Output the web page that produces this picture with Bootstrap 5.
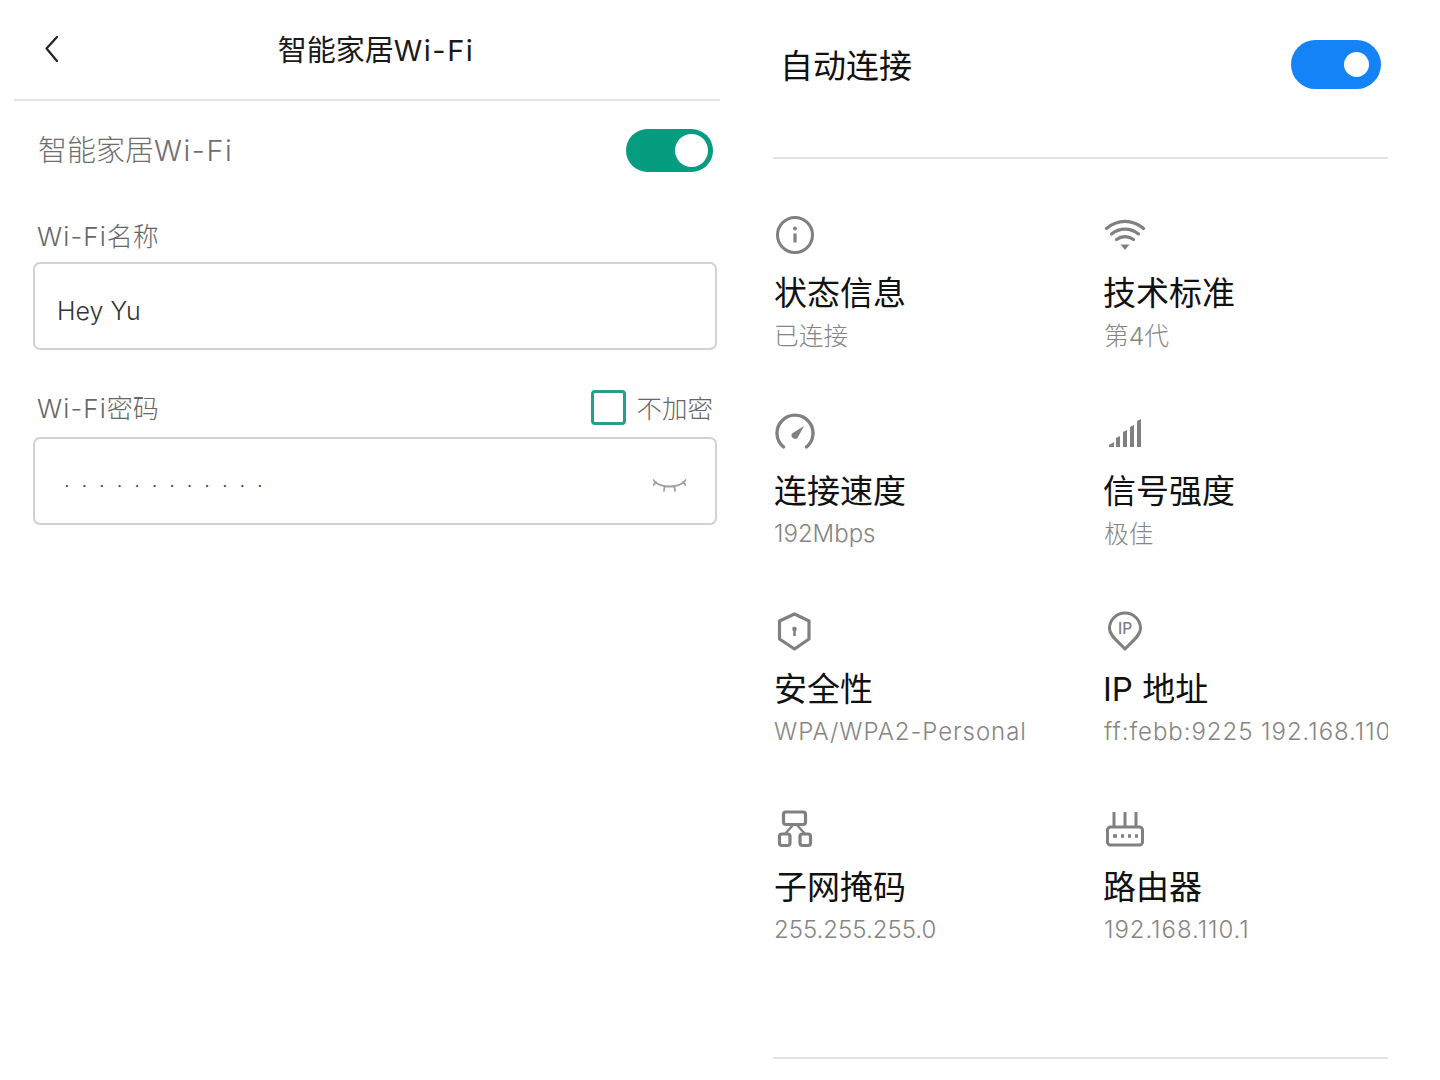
<!DOCTYPE html>
<html lang="zh">
<head>
<meta charset="utf-8">
<title>智能家居Wi-Fi</title>
<link href="https://cdn.jsdelivr.net/npm/bootstrap@5.3.0/dist/css/bootstrap.min.css" rel="stylesheet">
<style>
html,body{height:1080px;overflow:hidden;background:#fff}
body{font-family:Inter,"Noto Sans CJK SC",sans-serif;font-weight:400;color:#111}
.shell{width:1440px;height:1080px}
.pane-left{width:720px;padding-left:14px}
.pane-right{width:615px;margin-left:53px}
.top-bar{height:101px;border-bottom:2px solid #e4e4e4;padding-left:30px;padding-bottom:2px}
.top-title{font-size:29px;line-height:1;color:#1a1a1a;width:100%;text-align:center;padding-right:12px;padding-top:4px}
.back-ico{width:16px;height:30px;flex:none;margin-right:-16px}
.latin-wide{letter-spacing:1.500px}
.field-label .latin-wide{letter-spacing:1.100px}
.smart-row{height:100px;padding:0 7px 2px 24px}
.smart-label{font-size:29px;color:#6e6e6e;line-height:1;font-weight:300;margin-top:1px}
.sw-green{width:87px;height:43px;border-radius:22px;background:#069c80;padding-right:5px}
.sw-green i{display:block;width:33px;height:33px;border-radius:50%;background:#fff}
.field-label{font-size:26px;line-height:1;color:#666;font-weight:300;margin-top:2px}
.name-head{height:61px;padding:9px 0 0 23px}
.pass-head{height:87px;padding:28px 7px 0 23px}
.box-field{height:88px;margin-left:19px;width:684px;border:2px solid #d2d2d2;border-radius:7px;font-size:25px;font-weight:300;color:#333;padding:12px 29px 0 22px}
.check-box{width:35px;height:35px;border:3px solid #2a9d8a;border-radius:4px;flex:none;display:block}
.enc-wrap{gap:10px}
.no-enc{font-size:25.500px;color:#666;line-height:1;font-weight:300;margin-top:2px}
.dots-text{font-size:20px;letter-spacing:11.900px;color:#444;padding:0 0 2px 7px;line-height:1}
.eye-ico{margin-top:0}
.auto-row{height:159px;border-bottom:2px solid #e4e4e4;padding:0 7px 28px 7px}
.auto-title{font-size:33px;line-height:1;color:#111;margin-top:4px}
.sw-blue{width:90px;height:49px;border-radius:25px;background:#1583f8;padding-right:12px}
.sw-blue i{display:block;width:25px;height:25px;border-radius:50%;background:#fff}
.stat-grid{display:grid;grid-template-columns:329px 286px;grid-auto-rows:198px;padding-top:55px;height:900px;border-bottom:2px solid #e4e4e4}
.stat-cell{overflow:hidden;padding-left:1px;white-space:nowrap}
.stat-ico{display:block;width:42px;height:42px;margin:0 0 17px -1px}
.stat-cell:nth-child(even) .stat-ico{margin-left:1px}
.stat-cell:nth-child(even) .stat-val{padding-left:1px}
.stat-name{font-size:33px;line-height:40px;color:#111;margin-bottom:5px;font-weight:400}
.stat-val{font-size:24px;line-height:36px;color:#858585;font-weight:300}
.cjk-val{font-size:24.700px}
.val-wide{letter-spacing:.950px}
svg{display:block}
.ip-mark{font-family:Inter,sans-serif;font-size:15.500px;font-weight:500;fill:#808080}
</style>
</head>
<body>
<div class="shell d-flex">
  <div class="pane-left">
    <div class="top-bar d-flex align-items-center">
      <svg class="back-ico" viewBox="0 0 16 30" fill="none" stroke="#222" stroke-width="2.200" stroke-linecap="round" stroke-linejoin="round"><path d="M13 3 2.500 14.500 13 27"/></svg>
      <div class="top-title">智能家居<span class="latin-wide">Wi-Fi</span></div>
    </div>
    <div class="smart-row d-flex align-items-center justify-content-between">
      <span class="smart-label">智能家居<span class="latin-wide">Wi-Fi</span></span>
      <div class="sw-green d-flex align-items-center justify-content-end"><i></i></div>
    </div>
    <div class="name-head d-flex align-items-center"><span class="field-label"><span class="latin-wide">Wi-Fi</span>名称</span></div>
    <div class="box-field d-flex align-items-center">Hey Yu</div>
    <div class="pass-head d-flex align-items-center justify-content-between">
      <span class="field-label"><span class="latin-wide">Wi-Fi</span>密码</span>
      <div class="d-flex align-items-center enc-wrap"><span class="check-box"></span><span class="no-enc">不加密</span></div>
    </div>
    <div class="box-field d-flex align-items-center justify-content-between">
      <span class="dots-text">············</span>
      <svg class="eye-ico" width="33" height="20" viewBox="0 0 34 20" preserveAspectRatio="none" fill="none" stroke="#a0a0a0" stroke-width="1.800" stroke-linecap="round"><path d="M2 5c8 6 22 6 30 0M2 5 .500 3M32 5l1.500-2M3 5 .500 8M31 5l2.500 3M12 9l-.7 5M22 9l.7 5"/></svg>
    </div>
  </div>
  <div class="pane-right">
    <div class="auto-row d-flex align-items-center justify-content-between">
      <span class="auto-title">自动连接</span>
      <div class="sw-blue d-flex align-items-center justify-content-end"><i></i></div>
    </div>
    <div class="stat-grid">
      <div class="stat-cell">
        <svg class="stat-ico" viewBox="0 0 42 42" fill="none" stroke="#808080" stroke-width="3"><circle cx="22" cy="21" r="17.500"/><path d="M22 19.500v9" stroke-width="3.200"/><circle cx="22" cy="14.500" r="1.900" fill="#808080" stroke="none"/></svg>
        <div class="stat-name">状态信息</div><div class="stat-val cjk-val">已连接</div>
      </div>
      <div class="stat-cell">
        <svg class="stat-ico" viewBox="0 0 42 42" fill="none" stroke="#808080" stroke-width="3.200" stroke-linecap="round"><path d="M2.500 14.500c11-9.500 26-9.500 37 0M7.500 20c8-6.500 19-6.500 27 0M12.500 25.500c5-3.800 12-3.800 17 0"/><path d="M16.500 30.500h9L21 36z" fill="#808080" stroke="none"/></svg>
        <div class="stat-name">技术标准</div><div class="stat-val cjk-val">第4代</div>
      </div>
      <div class="stat-cell">
        <svg class="stat-ico" viewBox="0 0 42 42" fill="none" stroke="#808080" stroke-width="3.400" stroke-linecap="round"><path d="M10.500 35A18 18 0 1 1 33.500 35"/><path d="M19 21.500 31 14 24.500 26a3.600 3.600 0 0 1-5.500-4.500z" fill="#808080" stroke="none"/></svg>
        <div class="stat-name">连接速度</div><div class="stat-val">192Mbps</div>
      </div>
      <div class="stat-cell">
        <svg class="stat-ico" viewBox="0 0 42 42" fill="#808080"><path d="M5 35v-2l5-3v5zM12 35V26l4-2v11zM19 35V20l4-2v17zM26 35V15l4-2v22zM33 35V9l4-2v28z"/></svg>
        <div class="stat-name">信号强度</div><div class="stat-val cjk-val">极佳</div>
      </div>
      <div class="stat-cell">
        <svg class="stat-ico" viewBox="0 0 42 42" fill="none" stroke="#808080" stroke-width="3.200" stroke-linejoin="round"><path d="M21.500 4 36 11v18L21.500 39 6.500 29V11z"/><circle cx="21.500" cy="19" r="2.300" fill="#808080" stroke="none"/><path d="M21.500 20v6" stroke-width="2.600"/></svg>
        <div class="stat-name">安全性</div><div class="stat-val val-wide">WPA/WPA2-Personal</div>
      </div>
      <div class="stat-cell">
        <svg class="stat-ico" viewBox="0 0 42 42" fill="none" stroke="#808080" stroke-width="3" stroke-linejoin="round"><path d="M21 39C15 32 5.500 26 5.500 18.500a15.500 15.500 0 0 1 31 0C36.500 26 27 32 21 39z"/><text class="ip-mark" x="21" y="24" text-anchor="middle" stroke="none">IP</text></svg>
        <div class="stat-name">IP 地址</div><div class="stat-val val-wide">ff:febb:9225 192.168.110.1</div>
      </div>
      <div class="stat-cell">
        <svg class="stat-ico" viewBox="0 0 42 42" fill="none" stroke="#808080" stroke-width="3.200" stroke-linejoin="round"><rect x="10.500" y="4" width="22" height="12.500" rx="2.500"/><rect x="6.500" y="26" width="10.500" height="11.500" rx="2.500"/><rect x="27" y="26" width="10.500" height="11.500" rx="2.500"/><path d="M20 17 12 26M24 17l8 9" stroke-width="2.400"/></svg>
        <div class="stat-name">子网掩码</div><div class="stat-val">255.255.255.0</div>
      </div>
      <div class="stat-cell">
        <svg class="stat-ico" viewBox="0 0 42 42" fill="none" stroke="#808080" stroke-width="3" stroke-linejoin="round"><rect x="3.500" y="19" width="35" height="18" rx="3"/><path d="M10 4v15M21 4v15M32 4v15"/><path d="M9 28h4M17 28h3M24 28h3M31 28h3" stroke-width="3.400"/></svg>
        <div class="stat-name">路由器</div><div class="stat-val val-wide">192.168.110.1</div>
      </div>
    </div>
  </div>
</div>
<script src="https://cdn.jsdelivr.net/npm/bootstrap@5.3.0/dist/js/bootstrap.bundle.min.js"></script>
</body>
</html>
